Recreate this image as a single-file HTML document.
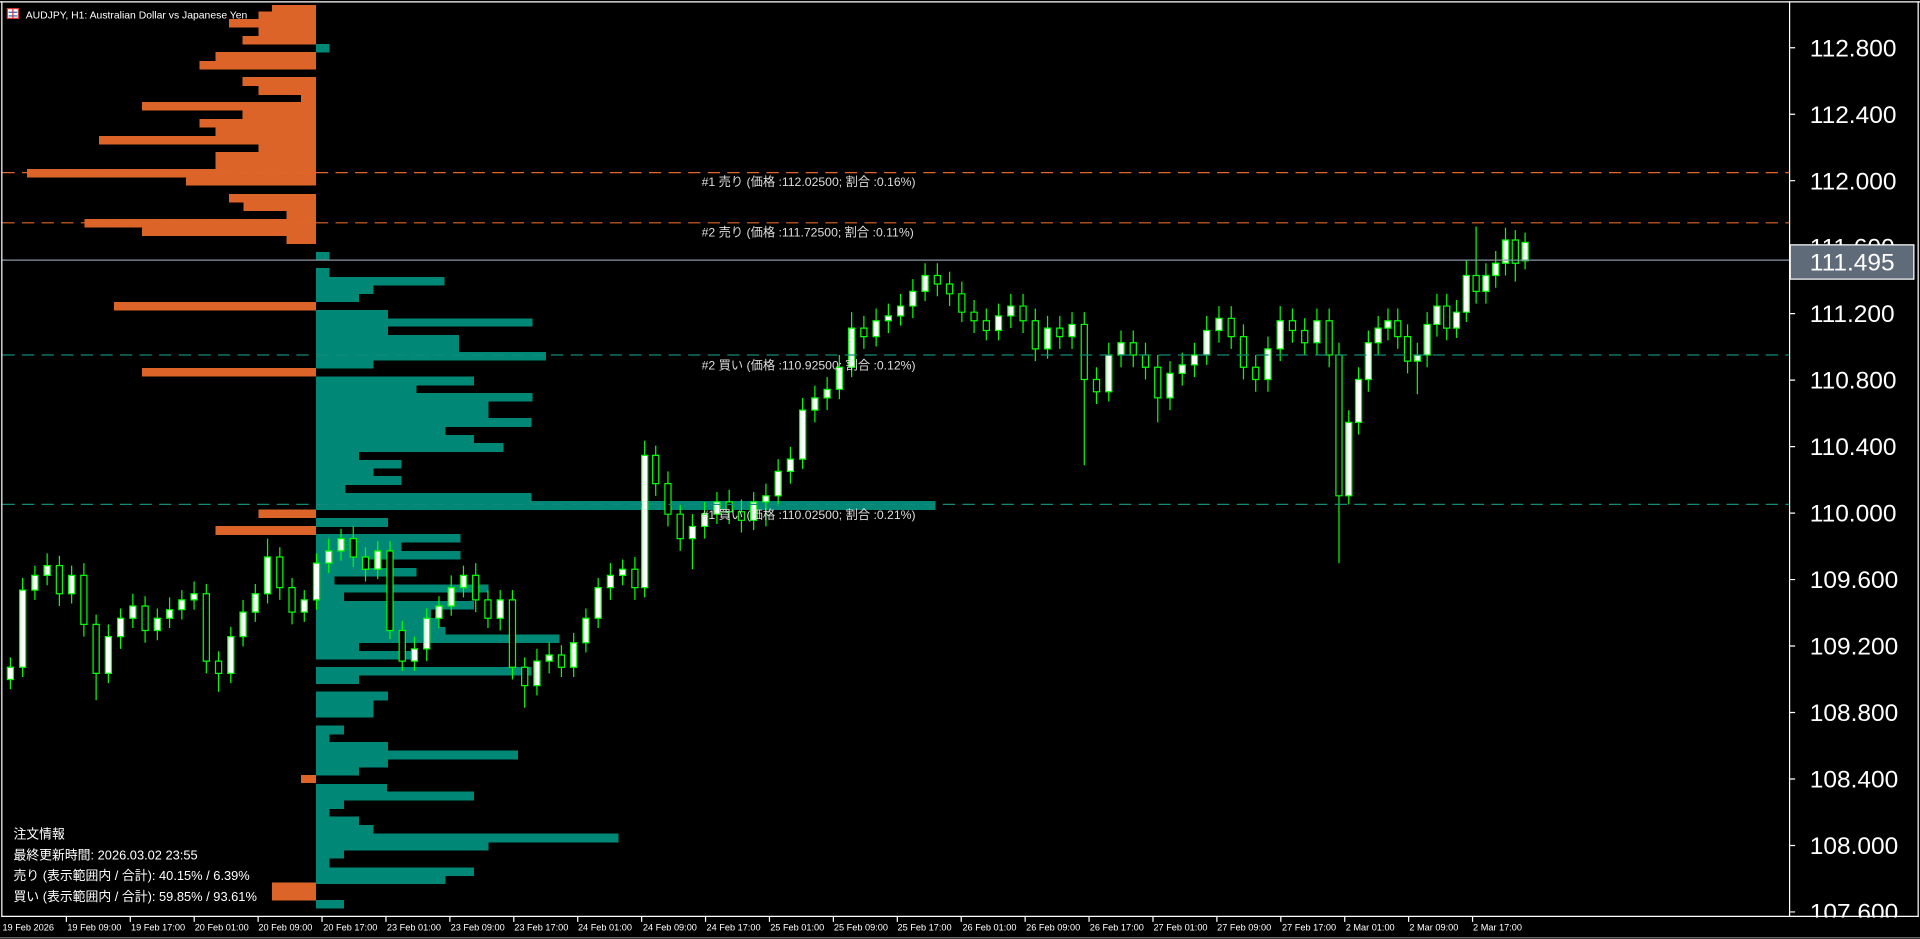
<!DOCTYPE html>
<html><head><meta charset="utf-8"><style>
html,body{margin:0;padding:0;background:#000;overflow:hidden}
svg{display:block}
text{font-family:"Liberation Sans","Noto Sans CJK JP",sans-serif}
</style></head><body>
<svg width="1920" height="939" viewBox="0 0 1568 767" preserveAspectRatio="none" xmlns="http://www.w3.org/2000/svg">
<rect width="1568" height="767" fill="#000"/>
<g fill="#dd6428" shape-rendering="crispEdges">
<rect x="222" y="4" width="36" height="11.5"/><rect x="211" y="9.5" width="47" height="6"/><rect x="187" y="15.5" width="71" height="7.1"/><rect x="211" y="22.6" width="47" height="6.8"/><rect x="198" y="29.4" width="60" height="7.1"/><rect x="176" y="42.5" width="82" height="7.3"/><rect x="163" y="49.8" width="95" height="7.1"/><rect x="198" y="62.9" width="60" height="7.3"/><rect x="211" y="70.2" width="47" height="7.4"/><rect x="246" y="77.6" width="12" height="5.7"/><rect x="116" y="83.3" width="142" height="7.1"/><rect x="198" y="90.4" width="60" height="6.8"/><rect x="163" y="97.2" width="95" height="7"/><rect x="176" y="104.2" width="82" height="6.8"/><rect x="81" y="111" width="177" height="7.1"/><rect x="211" y="118.1" width="47" height="6"/><rect x="176" y="124.1" width="82" height="13.9"/><rect x="22" y="138" width="236" height="6.8"/><rect x="152" y="144.8" width="106" height="6.8"/><rect x="187" y="158.4" width="71" height="7.1"/><rect x="199" y="165.5" width="59" height="6.8"/><rect x="234" y="172.3" width="24" height="6.5"/><rect x="69" y="178.8" width="189" height="7.1"/><rect x="116" y="185.9" width="142" height="6.8"/><rect x="234" y="192.7" width="24" height="6.5"/><rect x="93" y="246.6" width="165" height="7.1"/><rect x="116" y="300.5" width="142" height="7.1"/><rect x="211" y="416" width="47" height="7"/><rect x="176" y="429.7" width="82" height="7.3"/><rect x="246" y="633" width="12" height="6.6"/><rect x="222" y="721" width="36" height="14.6"/>
</g>
<g fill="#008776" shape-rendering="crispEdges">
<rect x="258" y="36" width="11" height="7"/><rect x="258" y="205.8" width="11" height="6.5"/><rect x="258" y="218.8" width="11" height="7.4"/><rect x="258" y="226.2" width="105" height="7.1"/><rect x="258" y="233.3" width="47" height="6.7"/><rect x="258" y="240" width="35" height="6.6"/><rect x="258" y="253.1" width="59" height="6.9"/><rect x="258" y="260" width="177" height="6.7"/><rect x="258" y="266.7" width="59" height="6.8"/><rect x="258" y="273.5" width="117" height="13.9"/><rect x="258" y="287.4" width="188" height="7.1"/><rect x="258" y="294.5" width="47" height="6.5"/><rect x="258" y="307.6" width="129" height="7.3"/><rect x="258" y="314.9" width="82" height="6.3"/><rect x="258" y="321.2" width="177" height="6.8"/><rect x="258" y="328" width="141" height="13.3"/><rect x="258" y="341.3" width="176" height="7.3"/><rect x="258" y="348.6" width="106" height="6.7"/><rect x="258" y="355.3" width="129" height="6.7"/><rect x="258" y="362" width="153" height="7.1"/><rect x="258" y="369.1" width="35" height="6.7"/><rect x="258" y="375.8" width="70" height="7"/><rect x="258" y="382.8" width="47" height="6.2"/><rect x="258" y="389" width="70" height="7"/><rect x="258" y="396" width="24" height="6.8"/><rect x="258" y="402.8" width="176" height="6.4"/><rect x="258" y="409.2" width="506" height="7.3"/><rect x="258" y="423" width="59" height="7.3"/><rect x="258" y="436" width="118" height="7.2"/><rect x="258" y="443.2" width="70" height="6.8"/><rect x="258" y="450" width="118" height="7"/><rect x="258" y="457" width="42" height="7"/><rect x="258" y="464" width="82" height="7"/><rect x="258" y="471" width="15" height="6.4"/><rect x="258" y="477.4" width="141" height="6.6"/><rect x="258" y="484" width="23" height="6.9"/><rect x="258" y="490.9" width="129" height="7.1"/><rect x="258" y="498" width="94" height="7"/><rect x="258" y="505" width="101" height="7"/><rect x="258" y="512" width="106" height="6.4"/><rect x="258" y="518.4" width="199" height="6.7"/><rect x="258" y="525.1" width="35" height="6.5"/><rect x="258" y="531.6" width="82" height="7"/><rect x="258" y="544.8" width="176" height="7"/><rect x="258" y="551.8" width="35" height="7"/><rect x="258" y="565" width="59" height="7.3"/><rect x="258" y="572.3" width="47" height="13.7"/><rect x="258" y="592.8" width="23" height="7.2"/><rect x="258" y="600" width="11" height="6"/><rect x="258" y="606" width="59" height="7"/><rect x="258" y="613" width="165" height="7.3"/><rect x="258" y="620.3" width="59" height="6.7"/><rect x="258" y="627" width="35" height="6.5"/><rect x="258" y="640.2" width="58" height="6.5"/><rect x="258" y="646.7" width="129" height="7.3"/><rect x="258" y="654" width="23" height="6.7"/><rect x="258" y="660.7" width="11" height="6.4"/><rect x="258" y="667.1" width="35" height="6.8"/><rect x="258" y="673.9" width="47" height="7.1"/><rect x="258" y="681" width="247" height="7.2"/><rect x="258" y="688.2" width="141" height="6.5"/><rect x="258" y="694.7" width="23" height="6.7"/><rect x="258" y="701.4" width="11" height="7"/><rect x="258" y="708.4" width="129" height="7"/><rect x="258" y="715.4" width="106" height="6.5"/><rect x="258" y="735" width="23" height="7"/>
</g>
<path fill="none" stroke="#00ff00" stroke-width="1" d="M8.5 537V563M18.5 472V553M28.5 462V490M38.5 452V478M48.5 454V495M58.5 462V493M68.5 460V520M78.5 502V572M88.5 510V558M98.5 497V530M108.5 485V513M118.5 487V525M128.5 497V523M138.5 488V513M148.5 482V506M158.5 475V498M168.5 477V550M178.5 532V565M188.5 512V558M198.5 490V528M208.5 477V508M218.5 440V493M228.5 447V490M238.5 472V510M248.5 482V508M258.5 452V498M268.5 440V468M278.5 432V458M288.5 430V463M298.5 447V475M308.5 442V473M318.5 442V522M328.5 507V548M338.5 520V548M348.5 497V540M358.5 487V513M368.5 470V503M378.5 462V488M388.5 460V500M398.5 482V513M408.5 482V515M418.5 482V555M428.5 537V578M438.5 530V568M448.5 525V550M458.5 527V553M468.5 517V553M478.5 497V533M488.5 472V513M498.5 460V490M508.5 457V478M518.5 455V490M526.5 360V488M535.5 364V405M545.5 385V430M555.5 412V450M565.5 420V465M575.5 410V440M585.5 402V428M595.5 400V428M605.5 408V435M615.5 402V433M625.5 395V430M635.5 375V413M645.5 365V395M655.5 325V383M665.5 315V345M675.5 308V335M685.5 290V326M695.5 255V308M705.5 258V285M715.5 252V283M725.5 248V272M735.5 240V266M745.5 228V260M755.5 215V246M765.5 215V242M775.5 222V250M785.5 230V263M795.5 245V272M805.5 252V278M815.5 248V278M825.5 240V268M835.5 240V272M845.5 252V295M855.5 258V293M865.5 258V285M875.5 255V285M885.5 255V380M895.5 300V330M905.5 280V328M915.5 270V300M925.5 270V300M935.5 280V310M945.5 290V345M955.5 295V335M965.5 288V315M975.5 280V308M985.5 258V298M995.5 250V280M1005.5 250V285M1015.5 265V310M1025.5 290V320M1035.5 275V320M1045.5 250V295M1055.5 252V280M1065.5 260V290M1075.5 252V290M1085.5 252V300M1093.5 280V460M1101.5 335V412M1109.5 300V355M1117.5 270V320M1125.5 258V290M1133.5 252V278M1141.5 252V285M1149.5 265V305M1157.5 280V322M1165.5 255V300M1173.5 240V275M1181.5 240V278M1189.5 245V276M1197.5 212V263M1205.5 185V248M1213.5 215V248M1221.5 205V235M1229.5 186V225M1237.5 188V230M1245.5 190V220"/>
<path fill="#fff" stroke="#00ff00" stroke-width="1" d="M6 545h5v10h-5zM16 482h5v63h-5zM26 470h5v12h-5zM36 462h5v8h-5zM56 470h5v15h-5zM86 520h5v30h-5zM96 505h5v15h-5zM106 495h5v10h-5zM126 505h5v10h-5zM136 498h5v7h-5zM146 490h5v8h-5zM156 485h5v5h-5zM186 520h5v30h-5zM196 500h5v20h-5zM206 485h5v15h-5zM216 455h5v30h-5zM246 490h5v10h-5zM256 460h5v30h-5zM266 450h5v10h-5zM276 440h5v10h-5zM306 450h5v15h-5zM336 530h5v10h-5zM346 505h5v25h-5zM356 495h5v10h-5zM366 480h5v15h-5zM376 470h5v10h-5zM406 490h5v15h-5zM436 540h5v20h-5zM446 535h5v5h-5zM466 525h5v20h-5zM476 505h5v20h-5zM486 480h5v25h-5zM496 470h5v10h-5zM506 465h5v5h-5zM524 372h5v108h-5zM563 430h5v10h-5zM573 420h5v10h-5zM583 410h5v10h-5zM613 410h5v15h-5zM623 405h5v5h-5zM633 385h5v20h-5zM643 375h5v10h-5zM653 335h5v40h-5zM663 325h5v10h-5zM673 318h5v7h-5zM683 300h5v18h-5zM693 268h5v32h-5zM713 262h5v13h-5zM723 258h5v4h-5zM733 250h5v8h-5zM743 238h5v12h-5zM753 225h5v13h-5zM813 258h5v12h-5zM823 250h5v8h-5zM853 268h5v17h-5zM873 265h5v10h-5zM903 290h5v30h-5zM913 280h5v10h-5zM953 305h5v20h-5zM963 298h5v7h-5zM973 290h5v8h-5zM983 270h5v20h-5zM993 260h5v10h-5zM1033 285h5v25h-5zM1043 262h5v23h-5zM1073 262h5v18h-5zM1099 345h5v60h-5zM1107 310h5v35h-5zM1115 280h5v30h-5zM1123 268h5v12h-5zM1131 262h5v6h-5zM1155 290h5v5h-5zM1163 265h5v25h-5zM1171 250h5v15h-5zM1187 255h5v13h-5zM1195 225h5v30h-5zM1211 225h5v13h-5zM1219 215h5v10h-5zM1227 196h5v19h-5zM1243 198h5v15h-5z"/>
<path fill="#000" stroke="#00ff00" stroke-width="1" d="M46 462h5v23h-5zM66 470h5v40h-5zM76 510h5v40h-5zM116 495h5v20h-5zM166 485h5v55h-5zM176 540h5v10h-5zM226 455h5v25h-5zM236 480h5v20h-5zM286 440h5v15h-5zM296 455h5v10h-5zM316 450h5v65h-5zM326 515h5v25h-5zM386 470h5v20h-5zM396 490h5v15h-5zM416 490h5v55h-5zM426 545h5v15h-5zM456 535h5v10h-5zM516 465h5v15h-5zM533 372h5v23h-5zM543 395h5v25h-5zM553 420h5v20h-5zM593 410h5v8h-5zM603 418h5v7h-5zM703 268h5v7h-5zM763 225h5v7h-5zM773 232h5v8h-5zM783 240h5v15h-5zM793 255h5v7h-5zM803 262h5v8h-5zM833 250h5v12h-5zM843 262h5v23h-5zM863 268h5v7h-5zM883 265h5v45h-5zM893 310h5v10h-5zM923 280h5v10h-5zM933 290h5v10h-5zM943 300h5v25h-5zM1003 260h5v15h-5zM1013 275h5v25h-5zM1023 300h5v10h-5zM1053 262h5v8h-5zM1063 270h5v10h-5zM1083 262h5v28h-5zM1091 290h5v115h-5zM1139 262h5v13h-5zM1147 275h5v20h-5zM1179 250h5v18h-5zM1203 225h5v13h-5zM1235 196h5v19h-5z"/>
<line x1="2" y1="141" x2="1461" y2="141" stroke="#e0652a" stroke-dasharray="10,6"/>
<line x1="2" y1="182" x2="1461" y2="182" stroke="#e0652a" stroke-dasharray="10,6"/>
<line x1="2" y1="290" x2="1461" y2="290" stroke="#118a77" stroke-dasharray="10,6"/>
<line x1="2" y1="412" x2="1461" y2="412" stroke="#118a77" stroke-dasharray="10,6"/>
<line x1="2" y1="212.5" x2="1461" y2="212.5" stroke="#8896a4"/>
<g fill="#ddd" font-size="10">
<text x="573" y="152">#1 売り (価格 :112.02500; 割合 :0.16%)</text>
<text x="573" y="193">#2 売り (価格 :111.72500; 割合 :0.11%)</text>
<text x="573" y="302">#2 買い (価格 :110.92500; 割合 :0.12%)</text>
<text x="573" y="424">#1 買い (価格 :110.02500; 割合 :0.21%)</text>
</g>
<line x1="0" y1="1.5" x2="1568" y2="1.5" stroke="#fff"/>
<line x1="1.5" y1="1" x2="1.5" y2="749" stroke="#fff"/>
<line x1="1461.5" y1="1" x2="1461.5" y2="749" stroke="#fff"/>
<line x1="1566.5" y1="1" x2="1566.5" y2="749" stroke="#fff"/>
<line x1="0" y1="766" x2="1568" y2="766" stroke="#888"/>
<path stroke="#fff" d="M1461 39h5M1461 93.3h5M1461 147.6h5M1461 201.9h5M1461 256.2h5M1461 310.5h5M1461 364.8h5M1461 419.1h5M1461 473.4h5M1461 527.7h5M1461 582h5M1461 636.3h5M1461 690.6h5M1461 744.9h5"/>
<g fill="#fff" font-size="20">
<text x="1478" y="46">112.800</text><text x="1478" y="100.3">112.400</text><text x="1478" y="154.6">112.000</text><text x="1478" y="208.9">111.600</text><text x="1478" y="263.2">111.200</text><text x="1478" y="317.5">110.800</text><text x="1478" y="371.8">110.400</text><text x="1478" y="426.1">110.000</text><text x="1478" y="480.4">109.600</text><text x="1478" y="534.7">109.200</text><text x="1478" y="589">108.800</text><text x="1478" y="643.3">108.400</text><text x="1478" y="697.6">108.000</text><text x="1478" y="751.9">107.600</text>
</g>
<rect x="1462" y="200" width="101" height="28" fill="#5f6b78" stroke="#fff"/>
<text x="1478" y="221" fill="#fff" font-size="20">111.495</text>
<rect x="0" y="749.5" width="1568" height="16" fill="#000"/>
<line x1="1" y1="748.5" x2="1567" y2="748.5" stroke="#fff"/>
<path stroke="#fff" d="M54.2 749v4M106.4 749v4M158.6 749v4M210.8 749v4M263 749v4M315.2 749v4M367.4 749v4M419.6 749v4M471.8 749v4M524 749v4M576.2 749v4M628.4 749v4M680.6 749v4M732.8 749v4M785 749v4M837.2 749v4M889.4 749v4M941.6 749v4M993.8 749v4M1046 749v4M1098.2 749v4M1150.4 749v4M1202.6 749v4"/>
<g fill="#fff" font-size="7.5">
<text x="2" y="760">19 Feb 2026</text><text x="55" y="760">19 Feb 09:00</text><text x="107" y="760">19 Feb 17:00</text><text x="159" y="760">20 Feb 01:00</text><text x="211" y="760">20 Feb 09:00</text><text x="264" y="760">20 Feb 17:00</text><text x="316" y="760">23 Feb 01:00</text><text x="368" y="760">23 Feb 09:00</text><text x="420" y="760">23 Feb 17:00</text><text x="472" y="760">24 Feb 01:00</text><text x="525" y="760">24 Feb 09:00</text><text x="577" y="760">24 Feb 17:00</text><text x="629" y="760">25 Feb 01:00</text><text x="681" y="760">25 Feb 09:00</text><text x="733" y="760">25 Feb 17:00</text><text x="786" y="760">26 Feb 01:00</text><text x="838" y="760">26 Feb 09:00</text><text x="890" y="760">26 Feb 17:00</text><text x="942" y="760">27 Feb 01:00</text><text x="994" y="760">27 Feb 09:00</text><text x="1047" y="760">27 Feb 17:00</text><text x="1099" y="760">2 Mar 01:00</text><text x="1151" y="760">2 Mar 09:00</text><text x="1203" y="760">2 Mar 17:00</text>
</g>
<rect x="6" y="7" width="9" height="8" fill="#fff" stroke="#d33"/>
<line x1="7" y1="10" x2="14" y2="10" stroke="#26c"/><line x1="7" y1="13" x2="14" y2="13" stroke="#26c"/><line x1="10.5" y1="7" x2="10.5" y2="15" stroke="#d33"/>
<text x="21" y="15" fill="#fff" font-size="8.5">AUDJPY, H1:  Australian Dollar vs Japanese Yen</text>
<g fill="#fff" font-size="10.5">
<text x="11" y="685">注文情報</text>
<text x="11" y="702">最終更新時間: 2026.03.02 23:55</text>
<text x="11" y="719">売り (表示範囲内 / 合計): 40.15% / 6.39%</text>
<text x="11" y="736">買い (表示範囲内 / 合計): 59.85% / 93.61%</text>
</g>
</svg>
</body></html>
